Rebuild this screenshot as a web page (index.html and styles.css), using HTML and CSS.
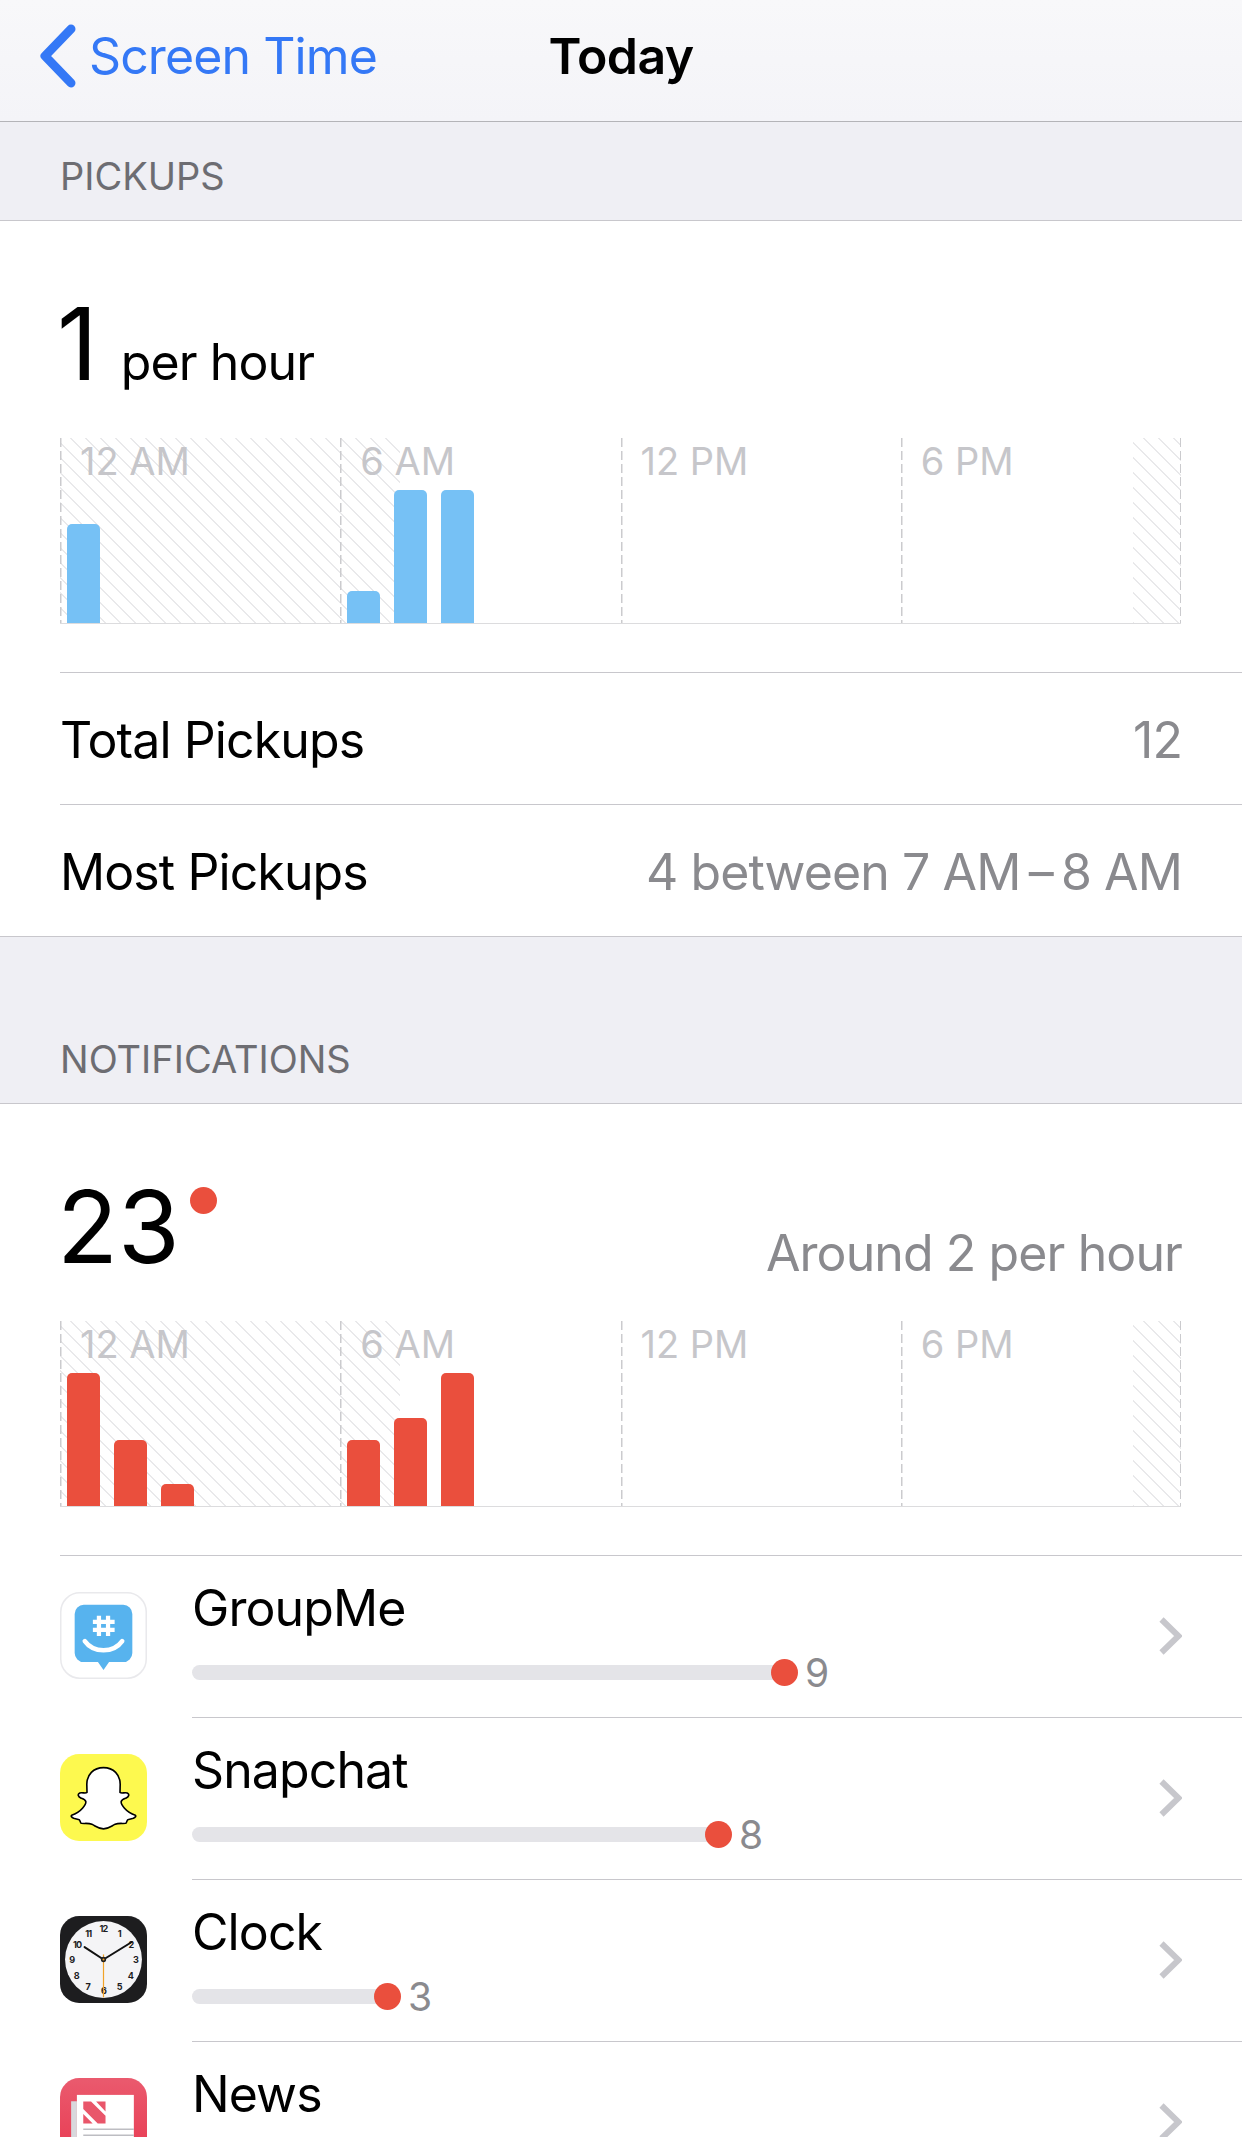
FILE: index.html
```html
<!DOCTYPE html>
<html lang="en">
<head>
<meta charset="utf-8">
<title>Today</title>
<link rel="stylesheet" href="styles.css">
</head>
<body>
<header class="nav">
  <a class="back">
    <svg class="back-icon" viewBox="0 0 38 64"><path d="M32 5 L6 32 L32 59" /></svg>
    <span>Screen Time</span>
  </a>
  <h1 class="nav-title">Today</h1>
</header>

<h2 class="section-head">PICKUPS</h2>
<section class="card">
  <div class="summary">
    <span class="big">1</span>
    <span class="unit">per hour</span>
  </div>
  <div class="chart">
    <div class="col"><span class="tick">12 AM</span><div class="bars"><i class="bar blue" style="height:99px"></i></div></div>
    <div class="col"><span class="tick">6 AM</span><div class="bars"><i class="bar blue" style="height:32px"></i><i class="bar blue" style="height:133px"></i><i class="bar blue" style="height:133px"></i></div></div>
    <div class="col"><span class="tick">12 PM</span></div>
    <div class="col"><span class="tick">6 PM</span></div>
  </div>
  <div class="stats">
    <div class="stat"><span>Total Pickups</span><span class="stat-value">12</span></div>
    <div class="stat"><span>Most Pickups</span><span class="stat-value">4 between 7 AM&#8201;–&#8201;8 AM</span></div>
  </div>
</section>

<h2 class="section-head tall">NOTIFICATIONS</h2>
<section class="card">
  <div class="summary">
    <span class="big">23</span>
    <i class="badge"></i>
    <span class="around">Around 2 per hour</span>
  </div>
  <div class="chart">
    <div class="col"><span class="tick">12 AM</span><div class="bars"><i class="bar red" style="height:133px"></i><i class="bar red" style="height:66px"></i><i class="bar red" style="height:22px"></i></div></div>
    <div class="col"><span class="tick">6 AM</span><div class="bars"><i class="bar red" style="height:66px"></i><i class="bar red" style="height:88px"></i><i class="bar red" style="height:133px"></i></div></div>
    <div class="col"><span class="tick">12 PM</span></div>
    <div class="col"><span class="tick">6 PM</span></div>
  </div>
  <div class="apps">
    <div class="app">
      <svg class="app-icon" viewBox="0 0 86 86">
        <rect x=".75" y=".75" width="84.5" height="84.5" rx="19" fill="#fff" stroke="#e9e9ec" stroke-width="1.5"/>
        <path d="M24 12.7H62.5A9 9 0 0 1 71.5 21.7V60.3A9 9 0 0 1 62.5 69.3H48.5L43 77L37.5 69.3H23.5A9 9 0 0 1 14.5 60.3V21.7A9 9 0 0 1 23.5 12.7Z" fill="#57b3ee"/>
        <path d="M38.5 23.5V43.5M47.5 23.5V43.5M32.5 29.5H54M32.5 37.5H54" stroke="#fff" stroke-width="4.2" fill="none"/>
        <path d="M24.5 48.5C33 60.5 53 60.5 61.5 48.5" stroke="#fff" stroke-width="4.5" stroke-linecap="round" fill="none"/>
      </svg>
      <div class="app-main">
        <div class="app-text">
          <div class="app-name">GroupMe</div>
          <div class="meter"><i class="track" style="width:593px"></i><i class="knob"></i><span class="count">9</span></div>
        </div>
        <svg class="chev" viewBox="0 0 23 38"><path d="M2.5 2.5L19.5 19L2.5 35.5"/></svg>
      </div>
    </div>
    <div class="app">
      <svg class="app-icon" viewBox="0 0 86 86">
        <rect width="86" height="86" rx="19" fill="#fdf94f"/>
        <path d="M43 13.5C53 13.5 59.5 20.5 59.5 30L59.3 38C61 39.5 64 37.5 66.5 38.5C69 39.7 68 42.5 65.5 43.5C63.5 44.3 61 45 60.5 47C60 49.5 65 57.5 74.5 60.5C75.5 61.5 74.5 62.8 72.5 63.5L67 65C66 66 66 68 65 68.5C62 69 58 68 54.5 69.5C51 71 48 74 43 74C38 74 35 71 31.5 69.5C28 68 24 69 21 68.5C20 68 20 66 19 65L13.5 63.5C11.5 62.8 10.5 61.5 11.5 60.5C21 57.5 26 49.5 25.5 47C25 45 22.5 44.3 20.5 43.5C18 42.5 17 39.7 19.5 38.5C22 37.5 25 39.5 26.7 38L26.5 30C26.5 20.5 33 13.5 43 13.5Z" fill="#fff" stroke="#000" stroke-width="1.6" stroke-linejoin="round"/>
      </svg>
      <div class="app-main">
        <div class="app-text">
          <div class="app-name">Snapchat</div>
          <div class="meter"><i class="track" style="width:527px"></i><i class="knob"></i><span class="count">8</span></div>
        </div>
        <svg class="chev" viewBox="0 0 23 38"><path d="M2.5 2.5L19.5 19L2.5 35.5"/></svg>
      </div>
    </div>
    <div class="app">
      <svg class="app-icon" viewBox="0 0 86 86">
        <rect width="86" height="86" rx="19" fill="#1d1d1f"/>
        <circle cx="43" cy="43" r="38" fill="#f4f4f6"/>
        <g text-anchor="middle" font-family="Inter, sans-serif" font-weight="700" font-size="9" fill="#1d1d1f">
          <text x="43" y="16">12</text><text x="58.5" y="20.5">1</text><text x="70" y="31.5">2</text><text x="74.5" y="46.5">3</text>
          <text x="69.5" y="62">4</text><text x="58.5" y="73">5</text><text x="43" y="77.5">6</text><text x="27.5" y="73">7</text>
          <text x="16" y="62">8</text><text x="11.5" y="46.5">9</text><text x="17" y="31.5">10</text><text x="28" y="20.5">11</text>
        </g>
        <path d="M43 43L71 25.7M43 43L24.3 30.7" stroke="#111" stroke-width="2" stroke-linecap="round"/>
        <path d="M43 38V80.5" stroke="#f0a328" stroke-width="1.2"/>
        <circle cx="43" cy="43" r="2.6" fill="#222"/>
        <circle cx="43" cy="43" r="1" fill="#f0a328"/>
      </svg>
      <div class="app-main">
        <div class="app-text">
          <div class="app-name">Clock</div>
          <div class="meter"><i class="track" style="width:196px"></i><i class="knob"></i><span class="count">3</span></div>
        </div>
        <svg class="chev" viewBox="0 0 23 38"><path d="M2.5 2.5L19.5 19L2.5 35.5"/></svg>
      </div>
    </div>
    <div class="app">
      <svg class="app-icon" viewBox="0 0 86 86">
        <defs><linearGradient id="newsbg" x1="0" y1="0" x2="0" y2="1"><stop offset="0" stop-color="#ea5a6e"/><stop offset="1" stop-color="#e8384f"/></linearGradient></defs>
        <rect width="86" height="86" rx="19" fill="url(#newsbg)"/>
        <rect x="11" y="23" width="5.7" height="52" fill="#d8d8dc"/>
        <rect x="16.7" y="16.7" width="56.3" height="58" fill="#fff"/>
        <path d="M23 23.3H30.7L45 37.3V45H37.3L23 30.7ZM35.7 23.3H45V33ZM23 35.7L32.3 45H23Z" fill="#e9566a"/>
        <path d="M23 50.7H73M23 56.7H73M23 62.7H73" stroke="#bdbdc2" stroke-width="1.5"/>
      </svg>
      <div class="app-main">
        <div class="app-text">
          <div class="app-name">News</div>
        </div>
        <svg class="chev" viewBox="0 0 23 38"><path d="M2.5 2.5L19.5 19L2.5 35.5"/></svg>
      </div>
    </div>
  </div>
</section>
</body>
</html>
```
FILE: styles.css
```css
* { box-sizing: border-box; }
html, body { margin: 0; padding: 0; height: 2137px; overflow: hidden; }
body {
  background: #fff;
  color: #000;
  font-family: Inter, "Liberation Sans", sans-serif;
  font-size: 50px;
  letter-spacing: -0.9px;
}
h1, h2 { margin: 0; font: inherit; }

.nav {
  height: 122px;
  display: grid;
  grid-template-columns: 1fr auto 1fr;
  align-items: center;
  padding: 0 39px 10px;
  background: linear-gradient(#f8f8fa, #f4f4f8);
  border-bottom: 1px solid #b4b4b8;
}
.back { display: flex; align-items: center; gap: 12px; color: #3478f6; }
.back-icon { width: 38px; height: 64px; fill: none; stroke: #3478f6; stroke-width: 9; stroke-linecap: round; stroke-linejoin: round; }
.nav-title { font-weight: 600; font-size: 50px; letter-spacing: -0.6px; }

.section-head {
  height: 99px;
  display: flex;
  align-items: flex-end;
  padding: 0 0 19px 60px;
  background: #efeff4;
  border-bottom: 1px solid #c8c7cc;
  color: #6d6d72;
  font-size: 38px;
  line-height: 50px;
  letter-spacing: 0;
}
.section-head.tall { height: 167px; }

.card { background: #fff; }

.summary {
  height: 217px;
  display: flex;
  align-items: baseline;
  padding: 73px 60px 0 61px;
}
.big { margin-left: -4px; font-size: 100px; font-weight: 400; line-height: 100px; letter-spacing: 0; }
.unit { margin-left: 23px; font-size: 50px; }
.badge { align-self: flex-start; width: 27px; height: 27px; margin: 10px 0 0 10px; border-radius: 50%; background: #ea4f3d; }
.around { align-self: flex-start; margin: 46px 0 0 auto; color: #8a8a8e; line-height: 60px; }

.chart {
  height: 186px;
  margin: 0 61px 0 60px;
  display: grid;
  grid-template-columns: repeat(4, 1fr);
  border-bottom: 1px solid #dcdcde;
  background-image:
    repeating-linear-gradient(#cbcbce 0 9px, transparent 9px 13px),
    repeating-linear-gradient(45deg, #e9e9eb 0 1.4px, transparent 1.4px 10.6px),
    repeating-linear-gradient(45deg, #e9e9eb 0 1.4px, transparent 1.4px 10.6px);
  background-size: 1.5px 100%, 340px 100%, 48px 100%;
  background-position: right top, left top, right top;
  background-repeat: no-repeat;
}
.col {
  display: grid;
  background: repeating-linear-gradient(#cbcbce 0 9px, transparent 9px 13px) left top / 1.5px 100% no-repeat;
}
.tick, .bars { grid-area: 1 / 1; }
.tick {
  padding-left: 20px;
  font-size: 38px;
  line-height: 46px;
  letter-spacing: 0;
  color: #c6c6ca;
}
.bars {
  display: flex;
  align-items: flex-end;
  gap: 14px;
  padding-left: 7px;
}
.bar { width: 33px; border-radius: 5px 5px 0 0; }
.blue { background: #76c1f5; }
.red { background: #ea4f3d; }

.stats { margin-top: 48px; border-bottom: 1px solid #c8c7cc; }
.stat {
  height: 132px;
  margin-left: 60px;
  padding: 2px 60px 0 0;
  display: flex;
  justify-content: space-between;
  align-items: center;
  border-top: 1px solid #c8c7cc;
}
.stat-value { color: #8a8a8e; }

.apps { margin: 48px 0 0 60px; border-top: 1px solid #c8c7cc; }
.app { display: flex; }
.app-icon { flex: none; width: 87px; height: 87px; margin-top: 36px; }
.app-main {
  flex: 1;
  height: 162px;
  margin-left: 45px;
  padding-right: 60px;
  display: flex;
  align-items: center;
  border-bottom: 1px solid #c8c7cc;
}
.app-text { flex: 1; align-self: flex-start; padding-top: 22px; }
.app-name { font-size: 50px; line-height: 60px; }
.meter { display: flex; align-items: center; height: 27px; margin-top: 21px; }
.track { height: 15px; border-radius: 8px; background: #e4e4e8; }
.knob { flex: none; width: 27px; height: 27px; margin-left: -14px; border-radius: 50%; background: #ea4f3d; }
.count { margin-left: 7px; color: #8a8a8e; font-size: 39px; line-height: 27px; letter-spacing: 0; }
.chev { flex: none; width: 23px; height: 38px; margin-top: -2px; fill: none; stroke: #c7c7cc; stroke-width: 6; }
```
